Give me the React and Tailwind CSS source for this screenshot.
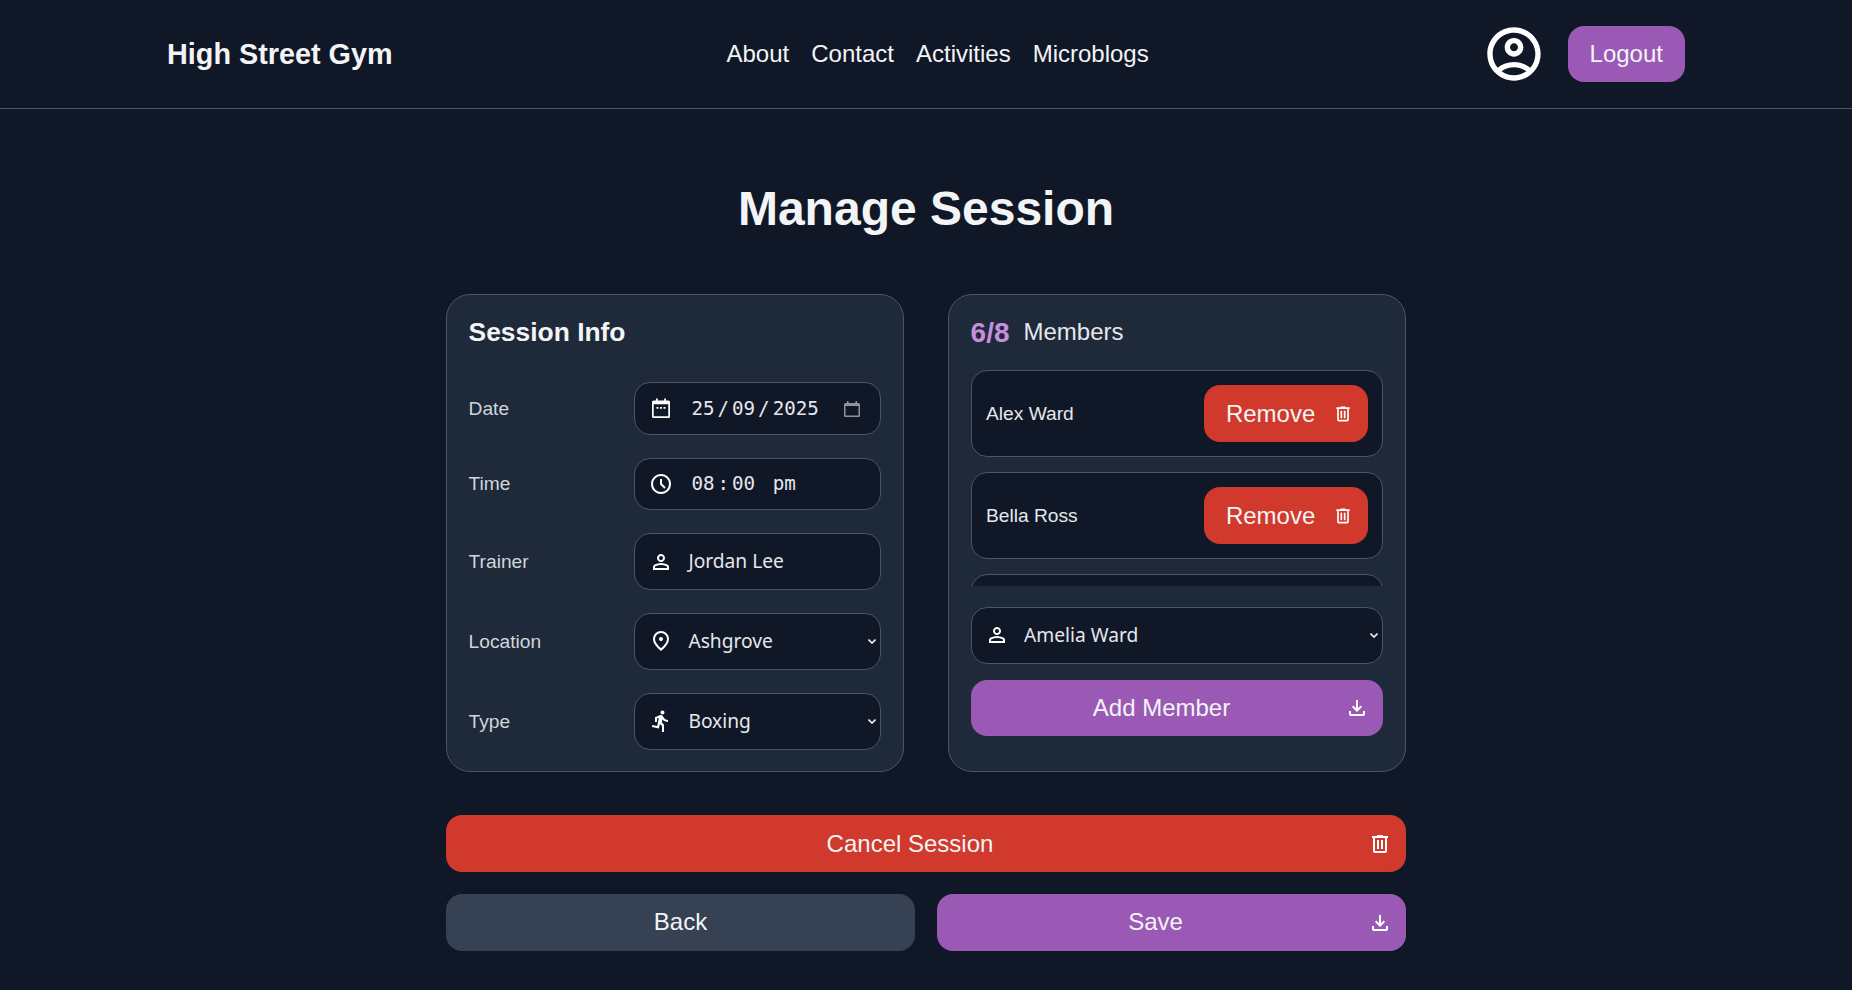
import React from "react";

const SYM = "0 -960 960 960";
const P = {
  del: "M280-120q-33 0-56.5-23.5T200-200v-520h-40v-80h200v-40h240v40h200v80h-40v520q0 33-23.5 56.5T680-120H280Zm400-600H280v520h400v-520ZM360-280h80v-360h-80v360Zm160 0h80v-360h-80v360ZM280-720v520-520Z",
  down: "M480-320 280-520l56-58 104 104v-326h80v326l104-104 56 58-200 200ZM240-160q-33 0-56.5-23.5T160-240v-120h80v120h480v-120h80v120q0 33-23.5 56.5T720-160H240Z",
  person: "M480-480q-66 0-113-47t-47-113q0-66 47-113t113-47q66 0 113 47t47 113q0 66-47 113t-113 47ZM160-160v-112q0-34 17.5-61.5T224-378q62-31 126-46.5T480-440q66 0 130 15.5T736-378q29 15 46.5 42.5T800-272v112H160Zm80-80h480v-32q0-11-5.5-20T700-306q-54-27-109-40.5T480-360q-56 0-111 13.5T260-306q-9 5-14.5 14t-5.5 20v32Zm240-320q33 0 56.5-23.5T560-640q0-33-23.5-56.5T480-720q-33 0-56.5 23.5T400-640q0 33 23.5 56.5T480-560Zm0-80Zm0 400Z",
  clock: "m612-292 56-56-148-148v-184h-80v216l172 172ZM480-80q-83 0-156-31.5T197-197q-54-54-85.5-127T80-480q0-83 31.5-156T197-763q54-54 127-85.5T480-880q83 0 156 31.5T763-763q54 54 85.5 127T880-480q0 83-31.5 156T763-197q-54 54-127 85.5T480-80Zm0-400Zm0 320q133 0 226.5-93.5T800-480q0-133-93.5-226.5T480-800q-133 0-226.5 93.5T160-480q0 133 93.5 226.5T480-160Z",
  pin: "M480-480q33 0 56.5-23.5T560-560q0-33-23.5-56.5T480-640q-33 0-56.5 23.5T400-560q0 33 23.5 56.5T480-480Zm0 294q122-112 181-203.5T720-552q0-109-69.5-178.5T480-800q-101 0-170.5 69.5T240-552q0 71 59 162.5T480-186Zm0 106Q319-217 239.5-334.5T160-552q0-150 96.5-239T480-880q127 0 223.5 89T800-552q0 100-79.5 217.5T480-80Zm0-480Z",
};

function Sym({ d, size = 24, className = "" }) {
  return (
    <svg viewBox={SYM} width={size} height={size} fill="currentColor" className={"shrink-0 text-white " + className}>
      <path d={d} />
    </svg>
  );
}

function Calendar() {
  return (
    <svg viewBox="0 0 24 24" width="24" height="24" fill="currentColor" className="shrink-0 text-white">
      <path fillRule="evenodd" d="M7 2.500h1.800v2h6.400v-2H17v2h2.500A1.500 1.500 0 0 1 21 6v14.500a1.500 1.500 0 0 1-1.500 1.500h-15A1.500 1.500 0 0 1 3 20.500V6a1.500 1.500 0 0 1 1.500-1.500H7ZM4.700 8.300v12h14.600v-12Z" />
      <path d="M7.500 11h2v1.700h-2ZM11 11h2v1.700h-2ZM14.500 11h2v1.700h-2Z" />
    </svg>
  );
}

function Run() {
  return (
    <svg viewBox="0 0 24 24" width="24" height="24" fill="currentColor" className="shrink-0 text-white">
      <path d="M13.49 5.48c1.1 0 2-.9 2-2s-.9-2-2-2-2 .9-2 2 .9 2 2 2zm-3.6 13.9l1-4.4 2.1 2v6h2v-7.500l-2.100-2 .6-3c1.300 1.500 3.300 2.500 5.500 2.500v-2c-1.900 0-3.500-1-4.300-2.400l-1-1.600c-.4-.6-1-1-1.700-1-.3 0-.5.1-.8.1l-5.200 2.200v4.700h2v-3.400l1.800-.7-1.600 8.100-4.900-1-.4 2 7 1.400z" />
    </svg>
  );
}

function Account() {
  return (
    <svg viewBox="0 0 24 24" width="64" height="64" fill="currentColor" className="shrink-0 text-white">
      <path d="M12 2C6.480 2 2 6.480 2 12s4.480 10 10 10 10-4.480 10-10S17.520 2 12 2zM7.350 18.500C8.660 17.560 10.260 17 12 17s3.340.56 4.650 1.500C15.340 19.440 13.740 20 12 20s-3.340-.56-4.650-1.500zm10.790-1.380C16.450 15.800 14.320 15 12 15s-4.450.8-6.140 2.120C4.700 15.730 4 13.950 4 12c0-4.420 3.580-8 8-8s8 3.580 8 8c0 1.950-.7 3.730-1.860 5.120z" />
      <path d="M12 6c-1.930 0-3.500 1.570-3.500 3.500S10.070 13 12 13s3.500-1.570 3.500-3.500S13.930 6 12 6zm0 5c-.83 0-1.500-.67-1.500-1.500S11.170 8 12 8s1.500.67 1.500 1.500S12.830 11 12 11z" />
    </svg>
  );
}

function PickerCal() {
  return (
    <svg viewBox="0 0 16 16" width="16" height="16" className="mt-[-1px] shrink-0 text-[#8f939b]" fill="currentColor">
      <path fillRule="evenodd" d="M3 0h1.500v2h7V0H13v2h1.500A1.500 1.500 0 0 1 16 3.500v11a1.500 1.500 0 0 1-1.500 1.500h-13A1.500 1.500 0 0 1 0 14.500v-11A1.500 1.500 0 0 1 1.500 2H3ZM1.500 5v9.200c0 .2.100.3.300.3h12.400c.2 0 .3-.1.3-.3V5Z" />
    </svg>
  );
}

function Field({ h, children }) {
  return (
    <div className={"flex w-[247.500px] items-center gap-[15.500px] rounded-[16px] border border-gray-600 bg-gray-900 pl-[14px] " + h}>
      {children}
    </div>
  );
}

function Row({ label, h, children }) {
  return (
    <div className="flex items-center justify-between">
      <span className="pt-[2px] text-[19.2px] text-gray-300">{label}</span>
      <Field h={h}>{children}</Field>
    </div>
  );
}

function Select({ value }) {
  return (
    <div className="flex h-full min-w-0 flex-1 items-center pr-[4.500px]">
      <select
        defaultValue={value}
        className="h-full min-w-0 flex-1 appearance-none bg-transparent pt-[1px] text-[19.2px] text-gray-200 outline-none [font-family:'Noto_Sans',sans-serif]"
      >
        <option value={value} className="bg-gray-900">{value}</option>
      </select>
      <svg viewBox="0 0 8 5" width="8" height="5" fill="none" stroke="currentColor" strokeWidth="1.6" className="mt-[1px] shrink-0 text-gray-100">
        <path d="M.5.6 4 4 7.500.6" />
      </svg>
    </div>
  );
}

function Action({ label, icon, bg, className = "", textClass = "" }) {
  return (
    <button className={"flex h-[57px] items-center rounded-[16px] pl-[6px] pr-[14px] text-[24px] text-gray-100 " + bg + " " + className}>
      <span className={"flex-1 text-center " + textClass}>{label}</span>
      {icon && <Sym d={icon} />}
    </button>
  );
}

function Member({ name }) {
  return (
    <div className="flex h-[87px] shrink-0 items-center justify-between rounded-[16px] border border-gray-600 bg-gray-900 pl-[14.400px] pr-[14px]">
      <span className="pt-[2px] text-[19.2px] text-gray-200">{name}</span>
      <button className="flex h-[57px] w-[164px] items-center rounded-[16px] bg-[#d0392b] pl-[21.500px] pr-[15px] text-[24px] text-gray-100">
        <span className="flex-1 pt-[1px] text-left">Remove</span>
        <Sym d={P.del} size={20} className="mt-[1px]" />
      </button>
    </div>
  );
}

export default function App() {
  return (
    <div className="min-h-screen bg-gray-900 text-gray-100 [font-family:'Liberation_Sans',Arial,sans-serif]">
      <header className="flex h-[109px] items-center justify-between border-b border-gray-600 px-[167px]">
        <div className="text-[28.8px] font-bold leading-none">High Street Gym</div>
        <nav className="ml-[1px] flex gap-[22px] text-[24px] text-gray-100">
          <a>About</a>
          <a>Contact</a>
          <a>Activities</a>
          <a>Microblogs</a>
        </nav>
        <div className="flex items-center gap-[22px]">
          <Account />
          <button className="flex h-[56px] items-center rounded-[16px] bg-[#9b59b6] px-[22px] text-[24px] text-gray-100">Logout</button>
        </div>
      </header>

      <main className="mx-auto flex w-[960px] flex-col pb-[39px] pt-[76px]">
        <h1 className="mb-[61px] text-center text-[48px] font-bold leading-none">Manage Session</h1>

        <div className="grid grid-cols-2 gap-[44px]">
          <section className="flex flex-col rounded-[24px] border border-gray-600 bg-gray-800 p-[21.600px]">
            <h2 className="mb-[35px] text-[26.4px] font-bold leading-[30px]">Session Info</h2>
            <div className="flex flex-col gap-[23px]">
              <Row label="Date" h="h-[53px]">
                <Calendar />
                <div className="flex flex-1 items-center pl-[3px] pr-[20px] pt-[2px] text-[19.2px] text-gray-200 [font-family:'DejaVu_Sans_Mono',monospace]">
                  <span>25</span>
                  <span className="w-[17.500px] text-center">/</span>
                  <span>09</span>
                  <span className="w-[17.500px] text-center">/</span>
                  <span className="flex-1">2025</span>
                  <PickerCal />
                </div>
              </Row>
              <Row label="Time" h="h-[52px]">
                <Sym d={P.clock} />
                <div className="flex flex-1 items-center pl-[3px] pt-[2px] text-[19.2px] text-gray-200 [font-family:'DejaVu_Sans_Mono',monospace]">
                  <span>08</span>
                  <span className="w-[17.500px] text-center">:</span>
                  <span>00</span>
                  <span className="ml-[17.500px]">pm</span>
                </div>
              </Row>
              <Row label="Trainer" h="h-[57px]">
                <Sym d={P.person} className="mt-[1px]" />
                <span className="pt-[1px] text-[19.2px] text-gray-200 [font-family:'Noto_Sans',sans-serif]">Jordan Lee</span>
              </Row>
              <Row label="Location" h="h-[57px]">
                <Sym d={P.pin} />
                <Select value="Ashgrove" />
              </Row>
              <Row label="Type" h="h-[57px]">
                <Run />
                <Select value="Boxing" />
              </Row>
            </div>
          </section>

          <section className="flex flex-col rounded-[24px] border border-gray-600 bg-gray-800 p-[21.600px]">
            <div className="mb-[23px] flex h-[30px] items-center gap-[14px]">
              <span className="pt-[2px] text-[28px] font-bold text-[#c58fde]">6/8</span>
              <span className="text-[24px] text-gray-200">Members</span>
            </div>
            <div className="flex h-[216px] flex-col gap-[15px] overflow-hidden">
              <Member name="Alex Ward" />
              <Member name="Bella Ross" />
              <div className="h-[87px] shrink-0 rounded-[16px] border border-gray-600 bg-gray-900" />
            </div>
            <div className="mt-[21px]">
              <Field h="h-[57px] !w-full !pl-[13px]">
                <Sym d={P.person} />
                <Select value="Amelia Ward" />
              </Field>
            </div>
            <Action label="Add Member" icon={P.down} bg="bg-[#9b59b6]" className="mt-[16px] !h-[56px] pl-[7px]" />
          </section>
        </div>

        <Action label="Cancel Session" icon={P.del} bg="bg-[#d0392b]" className="mt-[43px] w-full" />
        <div className="mt-[22px] grid grid-cols-2 gap-[22px]">
          <Action label="Back" bg="bg-gray-700" className="!px-0" textClass="pb-[1px]" />
          <Action label="Save" icon={P.down} bg="bg-[#9b59b6]" textClass="pb-[1px]" />
        </div>
      </main>
    </div>
  );
}
